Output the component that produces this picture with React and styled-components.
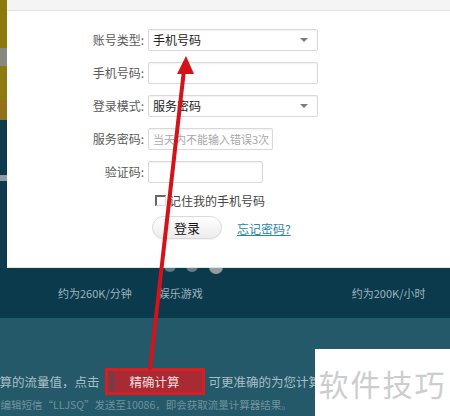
import React from "react";
import styled, { createGlobalStyle } from "styled-components";

const Global = createGlobalStyle`
  html, body { margin: 0; padding: 0; background: #24596a; }
  body { font-family: "Noto Sans CJK SC", "Noto Sans", sans-serif; overflow: hidden; }
`;

const Page = styled.div`
  position: relative;
  width: 450px;
  height: 416px;
  overflow: hidden;
  background: #24596a;
  display: flex;
  flex-direction: column;
`;

const Top = styled.div`
  display: flex;
  height: 268px;
  position: relative;
  z-index: 2;
`;

const Strip = styled.div`
  width: 7px;
  display: flex;
  flex-direction: column;
`;

const StripPart = styled.div`
  height: ${(p) => p.$h}px;
  flex: ${(p) => (p.$grow ? 1 : "none")};
  background: ${(p) => p.$c};
`;

const Dialog = styled.div`
  flex: 1;
  background: #fff;
  display: flex;
  flex-direction: column;
  border-bottom: 1px solid #dce8ec;
`;

const DialogHeader = styled.div`
  height: 10px;
  background: #f4f4f4;
  border-bottom: 1px solid #e2e2e2;
`;

const Form = styled.div`
  display: grid;
  grid-template-columns: 137px auto;
  column-gap: 4px;
  row-gap: 11px;
  padding-top: 18px;
  align-items: center;
  justify-items: start;
`;

const Label = styled.span`
  justify-self: end;
  font-size: 12px;
  color: #5a5a5a;
  line-height: 22px;
`;

const Field = styled.div`
  position: relative;
  box-sizing: border-box;
  width: ${(p) => p.$w}px;
  height: 22px;
  border: 1px solid #d9d9d9;
  border-radius: 2px;
  box-shadow: inset 0 1px 2px rgba(0, 0, 0, 0.06);
  padding-left: 4px;
  font-size: ${(p) => (p.$ph ? 11 : 12)}px;
  line-height: 20px;
  color: ${(p) => (p.$ph ? "#a8a8a8" : "#222")};
  white-space: nowrap;
  overflow: hidden;
`;

const Caret = styled.span`
  position: absolute;
  right: 9px;
  top: 8px;
  width: 0;
  height: 0;
  border-left: 4px solid transparent;
  border-right: 4px solid transparent;
  border-top: 4px solid #7a7a7a;
`;

const CheckRow = styled.label`
  grid-column: 2;
  display: flex;
  align-items: center;
  gap: 3px;
  padding-left: 7px;
  margin-top: -2px;
  font-size: 12px;
  color: #444;
`;

const Box = styled.span`
  width: 8px;
  height: 8px;
  border-top: 2px solid #666;
  border-left: 2px solid #666;
  border-right: 1px solid #ddd;
  border-bottom: 1px solid #ddd;
`;

const ActionRow = styled.div`
  grid-column: 2;
  display: flex;
  align-items: center;
  gap: 15px;
  padding-left: 4px;
  margin-top: -4px;
`;

const LoginButton = styled.button`
  width: 70px;
  height: 23px;
  border: 1px solid #dadada;
  border-radius: 12px;
  background: linear-gradient(#ffffff, #ececec);
  font-family: inherit;
  font-size: 13px;
  color: #111;
  padding: 0;
  box-shadow: 0 1px 1px rgba(0, 0, 0, 0.05);
`;

const Forgot = styled.a`
  font-size: 12px;
  color: #2c84a6;
  text-decoration: underline;
  margin-top: 2px;
`;

const Band = styled.div`
  position: relative;
  height: 50px;
  background: #0b3a4c;
  display: flex;
  align-items: center;
  font-size: 11px;
  color: #9fb5bd;
  padding-bottom: 1px;
  box-sizing: border-box;
`;

const BandText = styled.span`
  position: relative;
  z-index: 1;
  margin-left: ${(p) => p.$ml}px;
`;

/* carousel dots peeking out from under the dialog */
const Dot = styled.span`
  position: absolute;
  top: -8px;
  left: ${(p) => p.$x}px;
  width: ${(p) => p.$s}px;
  height: ${(p) => p.$s}px;
  border-radius: 50%;
  background: ${(p) => p.$c};
`;

const Lower = styled.div`
  flex: 1;
  display: flex;
  flex-direction: column;
  padding-top: 50px;
  color: #a9bfc6;
`;

const CalcRow = styled.div`
  display: flex;
  align-items: center;
  white-space: nowrap;
  font-size: 12.5px;
  margin-left: -13px;
`;

const CalcButton = styled.span`
  box-sizing: border-box;
  width: 100px;
  height: 27px;
  margin: 0 4px 0 5px;
  border: 3px solid #d81e22;
  background: linear-gradient(90deg, #7c3a44 0 7px, #a82a32 7px);
  color: #f2dede;
  font-size: 12.5px;
  display: flex;
  align-items: center;
  justify-content: center;
`;

const SmsRow = styled.div`
  margin-top: 2px;
  margin-left: -10px;
  white-space: nowrap;
  font-size: 10.5px;
  color: #6f939d;
`;

const Mark = styled.div`
  position: absolute;
  right: 0;
  bottom: 0;
  width: 135px;
  height: 67px;
  background: #fff;
  z-index: 3;
  display: flex;
  align-items: center;
  justify-content: center;
  font-size: 30px;
  letter-spacing: 2px;
  color: #cdcdcd;
  font-family: "Noto Sans CJK SC", sans-serif;
`;

const Overlay = styled.svg`
  position: absolute;
  left: 0;
  top: 0;
  z-index: 4;
  pointer-events: none;
`;

export default function App() {
  return (
    <Page>
      <Global />
      <Top>
        <Strip>
          <StripPart $h={48} $c="#8c7a0c" />
          <StripPart $h={18} $c="#8a877c" />
          <StripPart $h={34} $c="#8e7b10" />
          <StripPart $h={20} $c="#93701a" />
          <StripPart $h={55} $c="#0d3a4c" />
          <StripPart $h={6} $c="#8c9ca2" />
          <StripPart $grow $c="#0d3a4c" />
        </Strip>
        <Dialog>
          <DialogHeader />
          <Form>
            <Label>账号类型:</Label>
            <Field $w={170}>
              手机号码
              <Caret />
            </Field>
            <Label>手机号码:</Label>
            <Field $w={170} />
            <Label>登录模式:</Label>
            <Field $w={170}>
              服务密码
              <Caret />
            </Field>
            <Label>服务密码:</Label>
            <Field $w={125} $ph>
              当天内不能输入错误3次
            </Field>
            <Label>验证码:</Label>
            <Field $w={115} />
            <CheckRow>
              <Box />
              记住我的手机号码
            </CheckRow>
            <ActionRow>
              <LoginButton>登录</LoginButton>
              <Forgot>忘记密码?</Forgot>
            </ActionRow>
          </Form>
        </Dialog>
      </Top>
      <Band>
        <Dot $x={164} $s={12} $c="#5f7a84" />
        <Dot $x={186} $s={12} $c="#687f87" />
        <Dot $x={209} $s={14} $c="#959d9e" />
        <BandText $ml={58}>约为260K/分钟</BandText>
        <BandText $ml={27}>娱乐游戏</BandText>
        <BandText $ml={149}>约为200K/小时</BandText>
      </Band>
      <Lower>
        <CalcRow>
          计算的流量值，点击
          <CalcButton>精确计算</CalcButton>
          可更准确的为您计算
        </CalcRow>
        <SmsRow>的编辑短信“LLJSQ”发送至10086，即会获取流量计算器结果。</SmsRow>
      </Lower>
      <Mark>软件技巧</Mark>
      <Overlay width="450" height="416" viewBox="0 0 450 416">
        <line x1="150" y1="370" x2="184" y2="70" stroke="#d3121a" strokeWidth="4" />
        <polygon points="186,56 177,74 194,74" fill="#d3121a" />
      </Overlay>
    </Page>
  );
}
